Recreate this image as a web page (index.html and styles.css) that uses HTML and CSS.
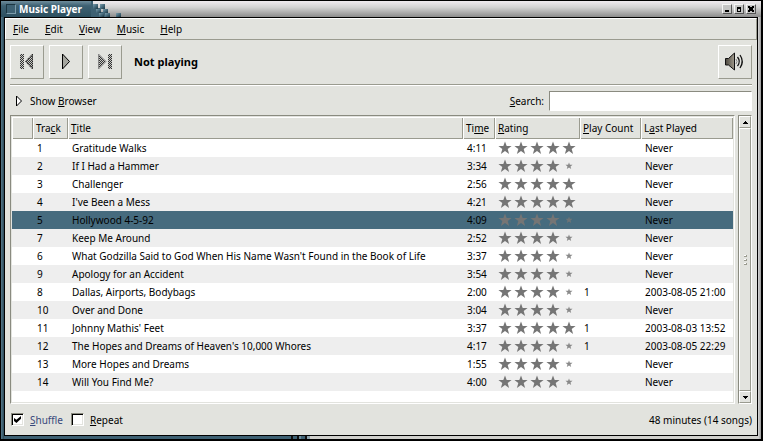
FILE: index.html
```html
<!DOCTYPE html>
<html lang="en">
<head>
<meta charset="utf-8">
<title>Music Player</title>
<link rel="stylesheet" href="styles.css">
</head>
<body>
<svg class="defs" aria-hidden="true">
  <defs>
    <pattern id="dither" width="2" height="2" patternUnits="userSpaceOnUse">
      <rect width="2" height="2" fill="#c8c9c4"/>
      <path d="M0 0h1v1h-1zM1 1h1v1h-1z" fill="#333"/>
    </pattern>
    <linearGradient id="cone" x1="0" x2="1"><stop offset="0" stop-color="#4c483f"/><stop offset="1" stop-color="#a09a8c"/></linearGradient>
    <linearGradient id="block" x1="0" y1="0" x2="1" y2="1"><stop offset="0" stop-color="#7d9dac"/><stop offset="0.5" stop-color="#466a7c"/><stop offset="1" stop-color="#1d3642"/></linearGradient>
    <path id="star" d="M7 0.4 8.7 5h4.900L9.700 8.100 11.100 12.900 7 10.100 2.900 12.900 4.300 8.100 0.400 5h4.900z"/>
    <path id="dot" d="M7 3.500 7.900 5.800h2.600L8.500 7.400 9.200 10 7 8.500 4.800 10 5.500 7.400 3.500 5.800h2.600z" opacity=".85"/>
    <symbol id="four" viewBox="0 0 80 14"><use href="#star"/><use href="#star" x="16"/><use href="#star" x="32"/><use href="#star" x="48"/><use href="#dot" x="64"/></symbol>
    <symbol id="five" viewBox="0 0 80 14"><use href="#star"/><use href="#star" x="16"/><use href="#star" x="32"/><use href="#star" x="48"/><use href="#star" x="64"/></symbol>
  </defs>
</svg>
<div class="window">
  <header class="titlebar">
    <div class="tab"><span class="window-menu"></span><h1>Music Player</h1></div>
    <svg class="blocks" width="32" height="16" viewBox="0 0 32 16" aria-hidden="true">
      <path d="M0 0h2v3h4v4h3v4h5v5H0z" fill="#3e6173"/>
      <g fill="url(#block)"><rect x="2" y="3" width="5" height="5"/><rect x="9" y="3" width="5" height="5"/><rect x="5" y="8" width="5" height="4"/><rect x="12" y="8" width="5" height="4"/><rect x="8" y="12" width="5" height="4"/><rect x="14" y="12" width="5" height="4"/><rect x="25" y="12" width="5" height="4"/></g>
    </svg>
    <div class="window-buttons">
      <button aria-label="Minimize"><svg width="8" height="8" viewBox="0 0 8 8"><path d="M2 5h4v2H2z"/></svg></button>
      <button aria-label="Maximize"><svg width="8" height="8" viewBox="0 0 8 8"><path d="M2 2h4v5H2zM3 4v2h2V4z" fill-rule="evenodd"/></svg></button>
      <button aria-label="Close"><svg width="8" height="8" viewBox="0 0 8 8"><path d="M1 1h2v1h2V1h2v2H6v2h1v2H5V6H3v1H1V5h1V3H1z"/></svg></button>
    </div>
  </header>
  <main class="content">
    <nav class="menubar">
      <button><u>F</u>ile</button><button><u>E</u>dit</button><button><u>V</u>iew</button><button><u>M</u>usic</button><button><u>H</u>elp</button>
    </nav>
    <section class="toolbar">
      <button class="tool" aria-label="Previous"><svg width="24" height="24" viewBox="0 0 24 24"><path d="M5 4h4v15H5z" fill="url(#dither)"/><path d="M17.500 4v15L10.500 11.500z" fill="url(#dither)" stroke="#222" stroke-dasharray="1.500 .7"/></svg></button>
      <button class="tool" aria-label="Play"><svg width="24" height="24" viewBox="0 0 24 24"><path d="M8.500 4v15L15.500 11.500z" fill="#a5a69f" stroke="#000"/></svg></button>
      <button class="tool" aria-label="Next"><svg width="24" height="24" viewBox="0 0 24 24"><path d="M5.500 4v15L13 11.500z" fill="url(#dither)" stroke="#888"/><path d="M15 4h4v15h-4z" fill="url(#dither)"/></svg></button>
      <h2>Not playing</h2>
      <button class="tool volume" aria-label="Volume"><svg width="24" height="24" viewBox="0 0 24 24"><path d="M2.500 8.500h3L11.500 3v17L5.500 15h-3z" fill="url(#cone)" stroke="#111"/><path d="M13 9q2 2.500 0 5" fill="none" stroke="#888"/><path d="M14.500 7q3.500 4.500 0 9M17 5q4.500 6.500 0 13" fill="none" stroke="#111" stroke-width="1.300"/></svg></button>
    </section>
    <section class="finder">
      <button class="expander"><svg width="8" height="12" viewBox="0 0 8 12"><path d="M1.500 1v10L6.500 6z" fill="#fff" stroke="#000"/></svg><span>Show <u>B</u>rowser</span></button>
      <label for="search"><u>S</u>earch:</label><input id="search" type="text">
    </section>
    <section class="library">
      <div class="list">
        <table>
          <colgroup><col class="c-state"><col class="c-track"><col><col class="c-time"><col class="c-rating"><col class="c-count"><col class="c-last"></colgroup>
          <thead><tr><th></th><th>Tra<u>c</u>k</th><th><u>T</u>itle</th><th>Ti<u>m</u>e</th><th><u>R</u>ating</th><th><u>P</u>lay Count</th><th>L<u>a</u>st Played</th></tr></thead>
          <tbody>
            <tr><td></td><td>1</td><td>Gratitude Walks</td><td>4:11</td><td><svg class="stars"><use href="#five"/></svg></td><td></td><td>Never</td></tr>
            <tr><td></td><td>2</td><td>If I Had a Hammer</td><td>3:34</td><td><svg class="stars"><use href="#four"/></svg></td><td></td><td>Never</td></tr>
            <tr><td></td><td>3</td><td>Challenger</td><td>2:56</td><td><svg class="stars"><use href="#five"/></svg></td><td></td><td>Never</td></tr>
            <tr><td></td><td>4</td><td>I've Been a Mess</td><td>4:21</td><td><svg class="stars"><use href="#five"/></svg></td><td></td><td>Never</td></tr>
            <tr class="selected"><td></td><td>5</td><td>Hollywood 4-5-92</td><td>4:09</td><td><svg class="stars"><use href="#four"/></svg></td><td></td><td>Never</td></tr>
            <tr><td></td><td>7</td><td>Keep Me Around</td><td>2:52</td><td><svg class="stars"><use href="#four"/></svg></td><td></td><td>Never</td></tr>
            <tr><td></td><td>6</td><td>What Godzilla Said to God When His Name Wasn't Found in the Book of Life</td><td>3:37</td><td><svg class="stars"><use href="#four"/></svg></td><td></td><td>Never</td></tr>
            <tr><td></td><td>9</td><td>Apology for an Accident</td><td>3:54</td><td><svg class="stars"><use href="#four"/></svg></td><td></td><td>Never</td></tr>
            <tr><td></td><td>8</td><td>Dallas, Airports, Bodybags</td><td>2:00</td><td><svg class="stars"><use href="#four"/></svg></td><td>1</td><td>2003-08-05 21:00</td></tr>
            <tr><td></td><td>10</td><td>Over and Done</td><td>3:04</td><td><svg class="stars"><use href="#four"/></svg></td><td></td><td>Never</td></tr>
            <tr><td></td><td>11</td><td>Johnny Mathis' Feet</td><td>3:37</td><td><svg class="stars"><use href="#five"/></svg></td><td>1</td><td>2003-08-03 13:52</td></tr>
            <tr><td></td><td>12</td><td>The Hopes and Dreams of Heaven's 10,000 Whores</td><td>4:17</td><td><svg class="stars"><use href="#four"/></svg></td><td>1</td><td>2003-08-05 22:29</td></tr>
            <tr><td></td><td>13</td><td>More Hopes and Dreams</td><td>1:55</td><td><svg class="stars"><use href="#four"/></svg></td><td></td><td>Never</td></tr>
            <tr><td></td><td>14</td><td>Will You Find Me?</td><td>4:00</td><td><svg class="stars"><use href="#four"/></svg></td><td></td><td>Never</td></tr>
          </tbody>
        </table>
      </div>
      <div class="scrollbar">
        <button aria-label="Scroll up"><svg width="5" height="3" viewBox="0 0 5 3"><path d="M2 0h1v1h1v1h1v1H0V2h1V1h1z"/></svg></button>
        <div class="thumb"><i></i><i></i><i></i></div>
        <button aria-label="Scroll down"><svg width="5" height="3" viewBox="0 0 5 3"><path d="M2 3h1V2h1V1h1V0H0v1h1v1h1z"/></svg></button>
      </div>
    </section>
    <footer class="status">
      <label class="shuffle"><input type="checkbox" checked><span><u>S</u>huffle</span></label>
      <label><input type="checkbox"><span><u>R</u>epeat</span></label>
      <output>48 minutes (14 songs)</output>
    </footer>
  </main>
</div>
</body>
</html>
```
FILE: styles.css
```css
* { box-sizing: border-box; }

body {
  margin: 0;
  background: #000;
  color: #000;
  font: 10px/16px "Noto Sans", sans-serif;
}

button, input {
  margin: 0;
  padding: 0;
  border: 0;
  border-radius: 0;
  background: none;
  color: inherit;
  font: inherit;
}

svg { display: block; }
h1, h2 { margin: 0; }
u { text-underline-offset: 1px; text-decoration-thickness: 1px; text-decoration-skip-ink: none; }

.defs { position: absolute; width: 0; height: 0; }

/* Window frame: teal on the left and lower left, metal on the right */
.window {
  display: flex;
  flex-direction: column;
  min-height: 100vh;
  padding: 1px 2px 2px 1px;
  background: #000;
}

.titlebar {
  display: flex;
  height: 16px;
  background: linear-gradient(#efebef, #d2d2d2 40%, #8c8c8c);
}

.tab {
  display: flex;
  align-items: center;
  gap: 3px;
  width: 90px;
  padding-left: 5px;
  background: linear-gradient(#6f8d9c, #3e6173 30%, #2d5060);
  color: #fff;
}

.tab h1 { font-size: 10px; line-height: 16px; white-space: nowrap; }

.window-menu {
  width: 10px;
  height: 10px;
  border: 1px solid;
  border-color: #1d3642 #7d9dac #7d9dac #1d3642;
  background: #3e6173;
}

.window-buttons {
  display: flex;
  align-items: center;
  gap: 2px;
  margin-left: auto;
  padding-right: 5px;
}

.window-buttons button {
  width: 10px;
  height: 10px;
  border: 1px solid;
  border-color: #f4f4f4 #555 #555 #f4f4f4;
  background: #c4c4c4;
}

.content {
  display: flex;
  flex: 1;
  flex-direction: column;
  padding: 1px 4px 4px;
  background:
    linear-gradient(#000, #000) 3px 0 / calc(100% - 6px) calc(100% - 3px) no-repeat,
    linear-gradient(90deg, #56798b, #2a4a5a) 0 0 / 3px 100% no-repeat,
    linear-gradient(90deg, #d8d8d8, #9a9a9a) 100% 0 / 3px 100% no-repeat,
    linear-gradient(90deg, #3e6173 290px, #111 290px 292px, #3e6173 292px 296px, #111 296px 298px, #6b8a99 298px 300px, #3e6173 300px 304px, #111 304px 306px, #8fa4ae 306px 309px, #d0d0cc 309px);
}

.content > * { background: #e2e3de; }

.menubar {
  display: flex;
  gap: 16px;
  height: 22px;
  padding: 0 7px;
  border: 1px solid;
  border-color: #fff #9a9b8f #9a9b8f #fff;
}

.toolbar {
  display: flex;
  align-items: center;
  gap: 5px;
  height: 46px;
  padding: 0 5px 2px;
  background: linear-gradient(#9a9b8f 50%, #fff 50%) 5px 100% / calc(100% - 10px) 2px no-repeat, #e2e3de;
}

.tool {
  display: grid;
  place-items: center;
  width: 34px;
  height: 34px;
  border: 1px solid;
  border-color: #fff #9a9b8f #9a9b8f #fff;
}

.toolbar h2 { padding-left: 7px; font-size: 11px; }
.volume { margin-left: auto; }

.finder {
  display: flex;
  align-items: center;
  gap: 5px;
  padding: 5px 5px 4px;
}

.expander { display: flex; align-items: center; gap: 7px; margin-right: auto; padding-left: 5px; }

.finder input {
  width: 203px;
  height: 20px;
  border: 1px solid;
  border-color: #8a8b80 #fff #fff #8a8b80;
  background: #fff;
}

.library {
  display: flex;
  flex: 1;
  gap: 3px;
  padding: 0 5px;
}

.list {
  flex: 1;
  border: 1px solid;
  border-color: #8a8b80 #fff #fff #8a8b80;
  outline: 1px solid #e2e3de;
  outline-offset: -2px;
  padding: 1px;
  background: #fff;
}

table { width: 100%; border-collapse: collapse; table-layout: fixed; }
.c-state { width: 21px; }
.c-track { width: 35px; }
.c-time { width: 32px; }
.c-rating { width: 85px; }
.c-count { width: 61px; }
.c-last { width: 92px; }

th, td { overflow: hidden; padding: 0 0 0 4px; text-align: left; white-space: nowrap; }

th {
  height: 22px;
  padding-left: 3px;
  background: #e2e3de;
  box-shadow: inset 1px 1px #fff, inset -1px -1px #9a9b8f;
  font-weight: normal;
}

td { height: 18px; }
td:nth-child(5) { padding-left: 3px; }
tbody tr:nth-child(even) { background: #eee; }
tbody .selected { background: #466b7e; }
.stars { width: 80px; height: 14px; fill: #757575; }

.scrollbar {
  display: flex;
  flex-direction: column;
  width: 14px;
  border: 1px solid;
  border-color: #8a8b80 #fff #fff #8a8b80;
}

.scrollbar button, .thumb {
  display: grid;
  place-content: center;
  height: 12px;
  border: 1px solid;
  border-color: #fff #9a9b8f #9a9b8f #fff;
}

.thumb { flex: 1; gap: 2px; }
.thumb i { width: 3px; height: 2px; background: #fff; border: solid #9a9b8f; border-width: 0 1px 1px 0; }

.status {
  display: flex;
  align-items: center;
  gap: 8px;
  height: 31px;
  padding: 0 5px 0 6px;
}

.status label { display: flex; align-items: center; gap: 6px; }
.shuffle { color: #38487c; }
.status output { margin-left: auto; }

input[type="checkbox"] {
  appearance: none;
  width: 13px;
  height: 13px;
  border: 1px solid;
  border-color: #8a8b80 #fff #fff #8a8b80;
  background: #fff;
  box-shadow: inset 1px 1px #000, inset -1px -1px #e2e3de;
}

input[type="checkbox"]:checked::before {
  content: "";
  display: block;
  width: 7px;
  height: 7px;
  margin: 2px;
  background: #000;
  clip-path: polygon(0 30%, 35% 55%, 100% 0, 100% 40%, 35% 100%, 0 70%);
}
```
